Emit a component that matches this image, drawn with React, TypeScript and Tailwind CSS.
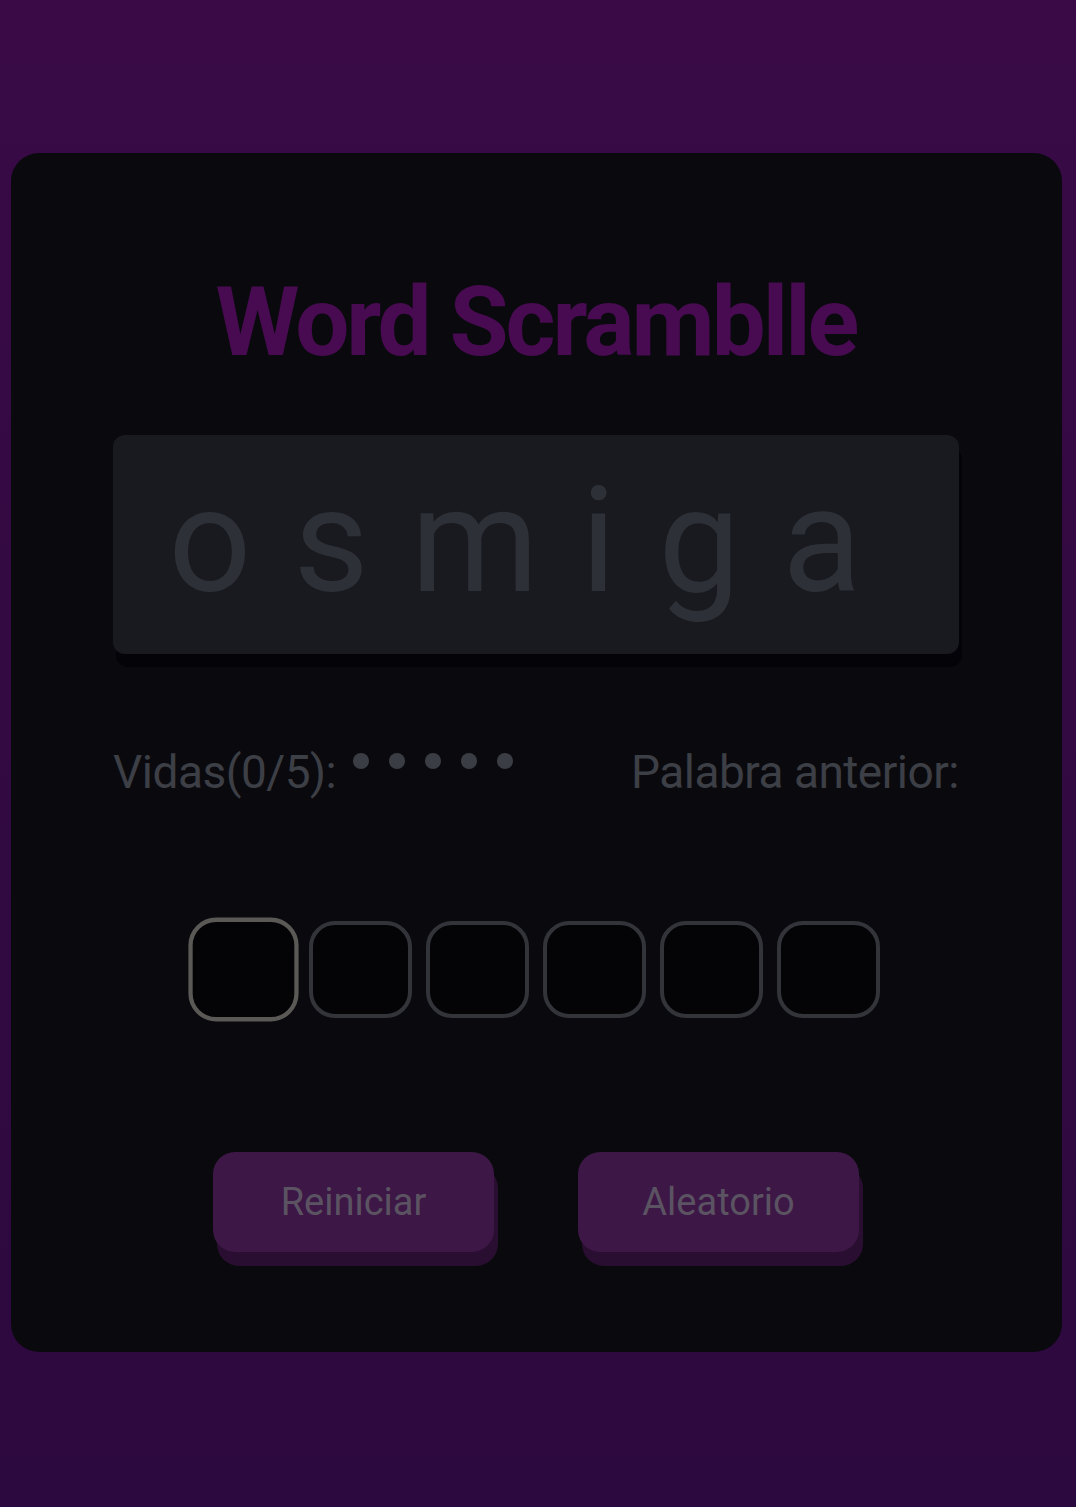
import React from "react";

export default function App() {
  const letters = ["o", "s", "m", "i", "g", "a"];
  return (
    <div className="min-h-[1507px] w-full bg-linear-to-b from-[#390a46] to-[#2c093e] pt-[153px] pb-[156px]" style={{ fontFamily: "Roboto, 'Noto Sans', sans-serif" }}>
      <div className="ml-[11px] mr-[14px] rounded-[28px] bg-[#0a0a0e] pt-[121px] pb-[100px] pl-[102px] pr-[103px] flex flex-col items-stretch">
        <h1 className="text-center text-[96px] font-bold leading-none tracking-[-3px] text-[#480b52] mb-[65px]">
          Word Scramblle
        </h1>
        <div className="h-[219px] rounded-[12px] bg-[#181a1f] shadow-[3px_13px_0_#040408] pt-[34px] flex justify-center">
          <div className="text-[146px] leading-none text-[#2e3038] tracking-[42px]">
            {letters.join("")}
          </div>
        </div>
        <div className="mt-[95px] flex justify-between items-start text-[#3d3f46] text-[46px] leading-none tracking-[-0.5px]">
          <div className="flex items-start">
            <span>Vidas(0/5):</span>
            <div className="ml-[17px] flex gap-[20px] pt-[4px]">
              {[0, 1, 2, 3, 4].map((i) => (
                <span key={i} className="block w-[16px] h-[16px] rounded-full bg-[#3b3d44]" />
              ))}
            </div>
          </div>
          <span>Palabra anterior:</span>
        </div>
        <div className="mt-[126px] flex justify-center gap-[14px]">
          {letters.map((_, i) => (
            <div
              key={i}
              className={
                i === 0
                  ? "w-[103px] h-[97px] rounded-[26px] border-[4px] border-[#5a5956] bg-[#040407] scale-[1.07]"
                  : "w-[103px] h-[97px] rounded-[26px] border-[4px] border-[#333439] bg-[#040407]"
              }
            />
          ))}
        </div>
        <div className="mt-[134px] flex justify-center gap-[84px]">
          {["Reiniciar", "Aleatorio"].map((t) => (
            <button
              key={t}
              className="w-[281px] h-[100px] rounded-[22px] bg-[#3d1746] shadow-[4px_14px_0_#2a0e31] text-[38px] text-[#5b5362]"
            >
              {t}
            </button>
          ))}
        </div>
      </div>
    </div>
  );
}
